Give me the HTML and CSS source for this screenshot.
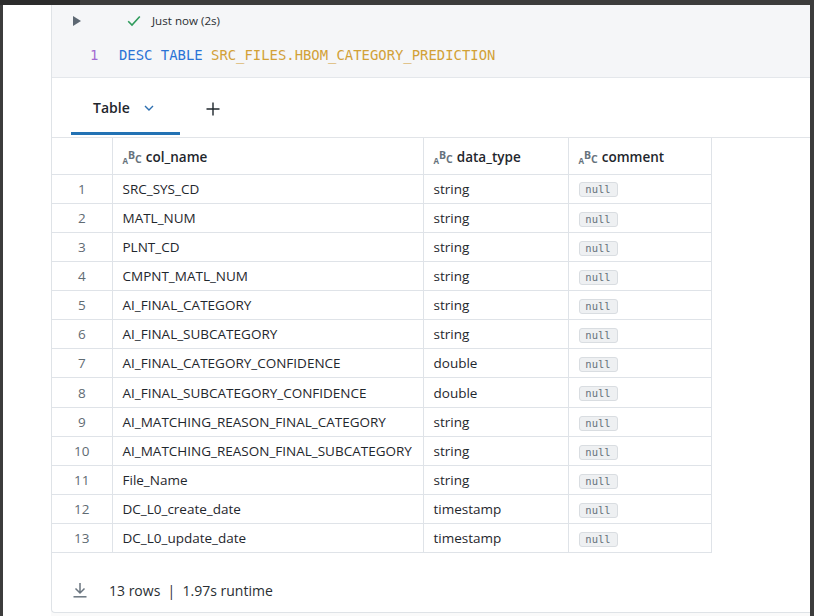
FILE: index.html
```html
<!DOCTYPE html>
<html>
<head>
<meta charset="utf-8">
<link rel="stylesheet" href="styles.css">
</head>
<body>
<div class="topbar"></div>
<div class="page">
  <div class="gutter"></div>
  <div class="cell">
    <div class="code-area">
      <div class="status-row">
        <svg class="run" width="10" height="12" viewBox="0 0 10 12"><path d="M1 1 L9 6 L1 11 Z" fill="#5d6873"/></svg>
        <svg class="check" width="14" height="12" viewBox="0 0 14 12"><path d="M1.2 6.2 L5 10 L12.8 1.5" fill="none" stroke="#2f9b5c" stroke-width="1.6"/></svg>
        <span class="status-text">Just now (2s)</span>
      </div>
      <div class="code-line">
        <span class="ln">1</span>
        <span class="code"><span class="kw">DESC TABLE</span> <span class="id">SRC_FILES.HBOM_CATEGORY_PREDICTION</span></span>
      </div>
    </div>
    <div class="tabs">
      <div class="tab active">
        <span class="tab-label">Table</span>
        <svg class="chev" width="10" height="6" viewBox="0 0 10 6"><path d="M1 1 L5 5 L9 1" fill="none" stroke="#2d6fb0" stroke-width="1.4"/></svg>
      </div>
      <div class="plus"><svg width="14" height="14" viewBox="0 0 14 14"><path d="M7 0.5 V13.5 M0.5 7 H13.5" stroke="#1f272d" stroke-width="1.4"/></svg></div>
    </div>
    <table class="grid">
      <colgroup>
        <col class="c-num"><col class="c-name"><col class="c-type"><col class="c-comment">
      </colgroup>
      <thead>
        <tr>
          <th></th>
          <th><span class="abc"><span class="a">A</span><span class="b">B</span><span class="c">C</span></span>col_name</th>
          <th><span class="abc"><span class="a">A</span><span class="b">B</span><span class="c">C</span></span>data_type</th>
          <th><span class="abc"><span class="a">A</span><span class="b">B</span><span class="c">C</span></span>comment</th>
        </tr>
      </thead>
      <tbody>
        <tr><td class="n">1</td><td>SRC_SYS_CD</td><td>string</td><td><span class="null">null</span></td></tr>
        <tr><td class="n">2</td><td>MATL_NUM</td><td>string</td><td><span class="null">null</span></td></tr>
        <tr><td class="n">3</td><td>PLNT_CD</td><td>string</td><td><span class="null">null</span></td></tr>
        <tr><td class="n">4</td><td>CMPNT_MATL_NUM</td><td>string</td><td><span class="null">null</span></td></tr>
        <tr><td class="n">5</td><td>AI_FINAL_CATEGORY</td><td>string</td><td><span class="null">null</span></td></tr>
        <tr><td class="n">6</td><td>AI_FINAL_SUBCATEGORY</td><td>string</td><td><span class="null">null</span></td></tr>
        <tr><td class="n">7</td><td>AI_FINAL_CATEGORY_CONFIDENCE</td><td>double</td><td><span class="null">null</span></td></tr>
        <tr><td class="n">8</td><td>AI_FINAL_SUBCATEGORY_CONFIDENCE</td><td>double</td><td><span class="null">null</span></td></tr>
        <tr><td class="n">9</td><td>AI_MATCHING_REASON_FINAL_CATEGORY</td><td>string</td><td><span class="null">null</span></td></tr>
        <tr><td class="n">10</td><td>AI_MATCHING_REASON_FINAL_SUBCATEGORY</td><td>string</td><td><span class="null">null</span></td></tr>
        <tr><td class="n">11</td><td>File_Name</td><td>string</td><td><span class="null">null</span></td></tr>
        <tr><td class="n">12</td><td>DC_L0_create_date</td><td>timestamp</td><td><span class="null">null</span></td></tr>
        <tr><td class="n">13</td><td>DC_L0_update_date</td><td>timestamp</td><td><span class="null">null</span></td></tr>
      </tbody>
    </table>
    <div class="footer">
      <svg class="dl" width="16" height="16" viewBox="0 0 16 16"><path d="M8 1 V11 M3.5 6.5 L8 11 L12.5 6.5" fill="none" stroke="#6b7680" stroke-width="1.5"/><path d="M1.5 14.8 H14.5" stroke="#6b7680" stroke-width="1.5"/></svg>
      <span class="foot-text">13 rows&nbsp; |&nbsp; 1.97s runtime</span>
    </div>
  </div>
</div>
</body>
</html>
```

FILE: styles.css
```css
* { box-sizing: border-box; }
html, body { margin: 0; padding: 0; }
body {
  width: 814px;
  height: 616px;
  background: #3c3c3c;
  overflow: hidden;
  font-family: "Open Sans", "Noto Sans", sans-serif;
  color: #1f272d;
}
.topbar {
  height: 5px;
  background: linear-gradient(to right, #2c2c2c 0, #2c2c2c 80px, #3c3c3c 80px);
}
.page {
  display: flex;
  margin-left: 3px;
  margin-right: 4px;
  height: 611px;
  background: #fafafa;
}
.gutter {
  width: 48px;
  flex: none;
  background: #ffffff;
}
.cell {
  flex: 1;
  background: #ffffff;
  border-left: 1px solid #dfe3e7;
  border-bottom: 1px solid #dfe3e7;
  border-bottom-left-radius: 4px;
  height: 608px;
  display: flex;
  flex-direction: column;
}
.code-area {
  height: 73px;
  background: #f5f6f8;
  border-bottom: 1px solid #e4e7eb;
  flex: none;
}
.status-row {
  display: flex;
  align-items: center;
  height: 30px;
  padding-left: 20px;
  padding-top: 1px;
}
.run { display: block; }
.check { margin-left: 45px; display: block; }
.status-text {
  margin-left: 11px;
  font-size: 11.6px;
  font-family: "Open Sans", sans-serif;
  color: #2a2f33;
}
.code-line {
  display: flex;
  align-items: center;
  height: 20px;
  margin-top: 10px;
  font-family: "DejaVu Sans Mono", monospace;
  font-size: 13.9px;
  white-space: pre;
}
.ln {
  width: 29px;
  margin-left: 38px;
  color: #a36ad1;
}
.kw { color: #2b73d6; }
.id { color: #d2a137; }
.tabs {
  height: 60px;
  flex: none;
  display: flex;
  align-items: stretch;
  border-bottom: 1px solid #e1e4e8;
  padding-left: 19px;
}
.tab {
  width: 109px;
  display: flex;
  align-items: center;
  padding-left: 22px;
  border-bottom: 3px solid #2272b4;
  margin-bottom: 2px;
  padding-top: 5px;
}
.tab-label {
  font-size: 14px;
  font-weight: 600;
  color: #1f272d;
}
.chev { margin-left: 14px; display: block; }
.plus {
  display: flex;
  align-items: center;
  margin-left: 26px;
  padding-top: 3px;
}
.plus svg { display: block; }
.grid {
  border-collapse: collapse;
  width: 659px;
  table-layout: fixed;
  font-size: 13.5px;
}
.c-num { width: 60px; }
.c-name { width: 311px; }
.c-type { width: 145px; }
.c-comment { width: 143px; }
.grid th, .grid td {
  border: 1px solid #dfe3e8;
  padding: 0 10px;
  text-align: left;
  white-space: nowrap;
}
.grid tr > :first-child { border-left: none; }
.grid th {
  height: 36px;
  padding-top: 2px;
  font-weight: 600;
  border-top: none;
}
.grid td { height: 29.15px; }
.grid td.n {
  text-align: center;
  color: #5f6b73;
  padding: 0;
}
.abc {
  display: inline-flex;
  align-items: flex-start;
  height: 15px;
  margin-right: 4px;
  vertical-align: -2px;
  font-weight: 700;
  color: #66727c;
  font-family: "Open Sans", sans-serif;
  line-height: 1;
}
.abc .a { font-size: 8px; margin-top: 7px; }
.abc .b { font-size: 10.5px; margin-top: 0; }
.abc .c { font-size: 10.5px; margin-top: 4px; }
.null {
  display: inline-block;
  width: 39px;
  height: 15px;
  line-height: 13px;
  text-align: center;
  font-family: "DejaVu Sans Mono", monospace;
  font-size: 10.5px;
  color: #68737c;
  background: #eef0f2;
  border: 1px solid #d9dde1;
  border-radius: 3px;
  vertical-align: middle;
}
.footer {
  flex: 1;
  display: flex;
  align-items: center;
  padding-left: 20px;
  padding-top: 15px;
}
.dl { display: block; }
.foot-text {
  margin-left: 21px;
  font-size: 14px;
  color: #2a2f33;
}
```
